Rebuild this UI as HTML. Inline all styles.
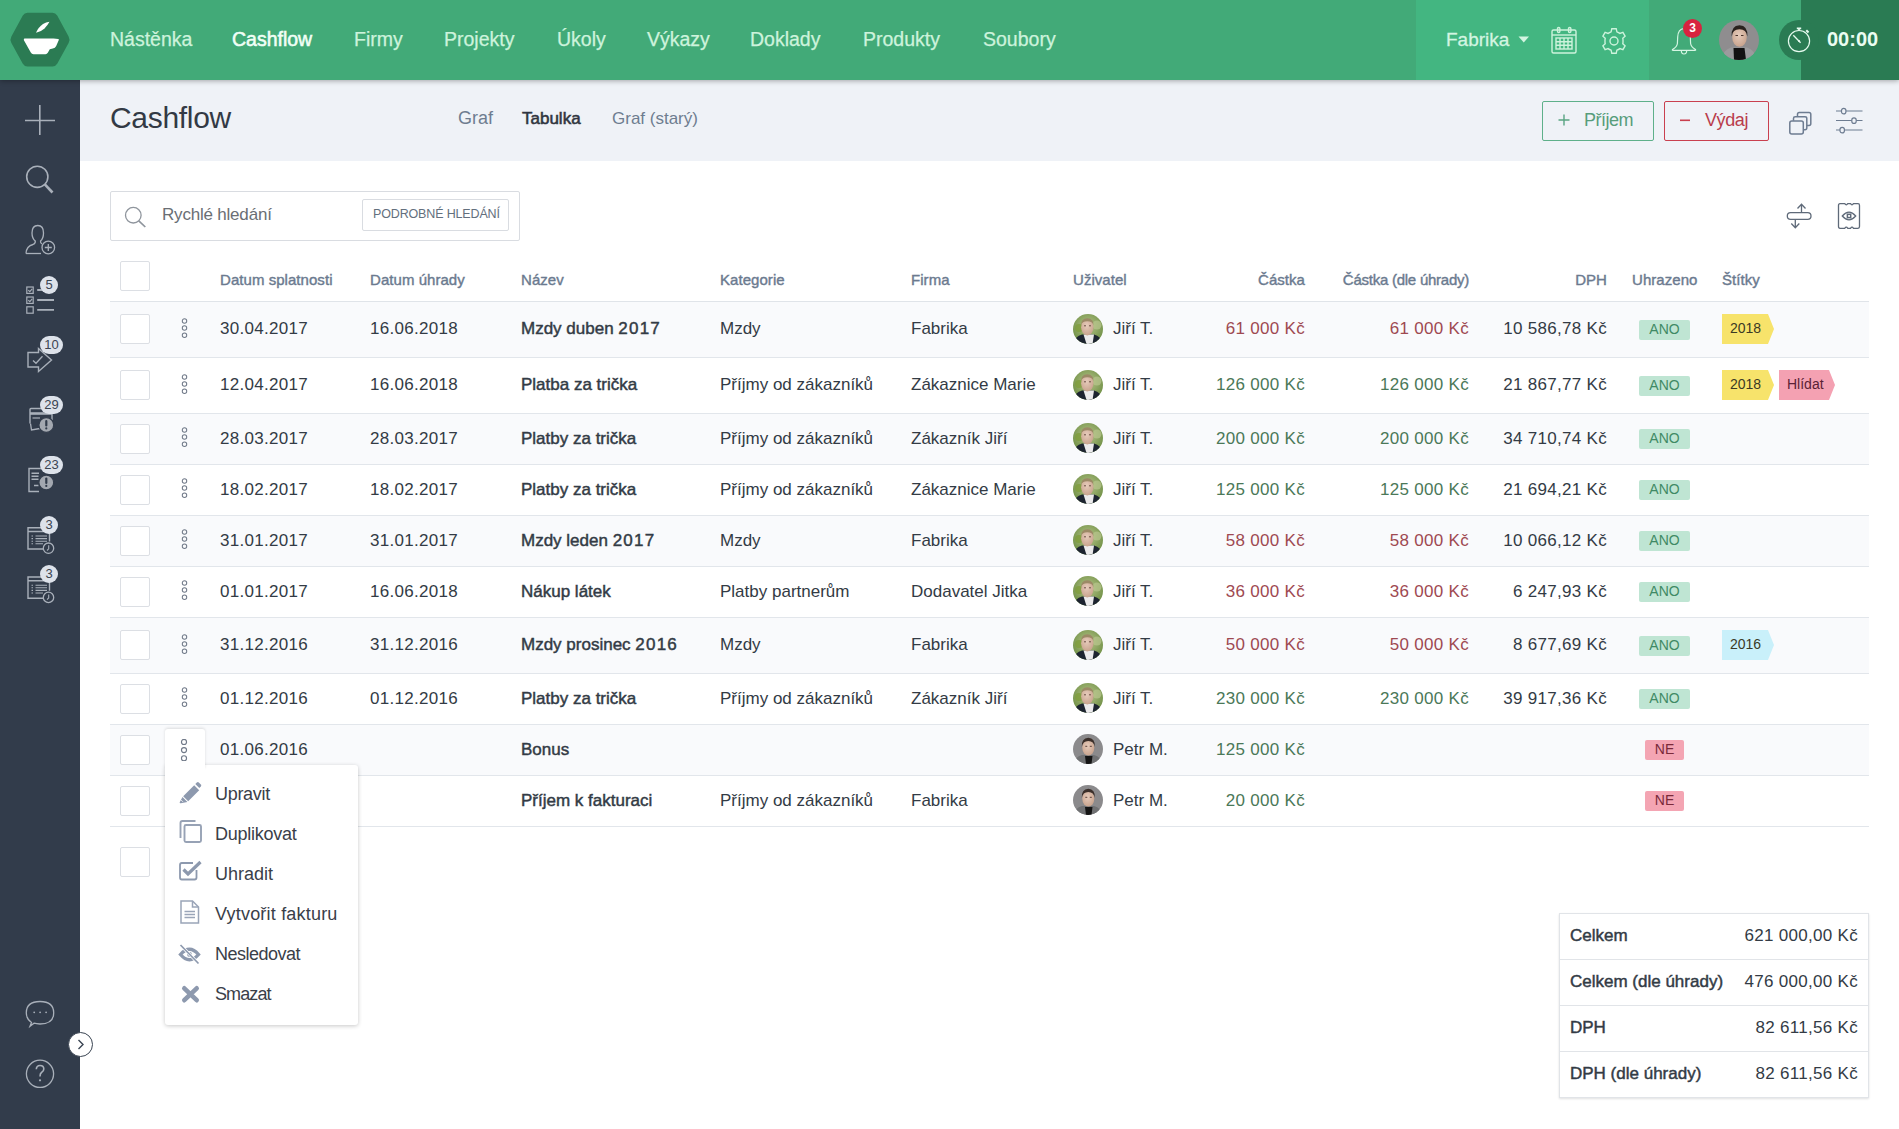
<!DOCTYPE html>
<html><head><meta charset="utf-8"><title>Cashflow</title>
<style>
*{box-sizing:border-box;margin:0;padding:0}
html,body{width:1899px;height:1129px;overflow:hidden;background:#fff;font-family:"Liberation Sans",sans-serif;color:#333b45}
.a{position:absolute}
.t{position:absolute;white-space:nowrap;line-height:1}
#hdr{position:absolute;left:0;top:0;width:1899px;height:80px;background:#42aa78;box-shadow:0 1px 5px rgba(0,0,0,.32);z-index:5}
#side{position:absolute;left:0;top:80px;width:80px;height:1049px;background:#323c4b;z-index:3}
#sub{position:absolute;left:80px;top:80px;width:1819px;height:81px;background:#eff2f7}
.nav{font-size:19.5px;color:#cdf3dc;top:29.5px;-webkit-text-stroke:0.25px}
.hd{font-size:15px;font-weight:400;-webkit-text-stroke:0.4px;color:#6b7a8f;top:272.3px;letter-spacing:0.05px}
.cb{position:absolute;left:120px;width:30px;height:30px;border:1px solid #dcdfe4;border-radius:2px;background:#fff}
.row{position:absolute;left:110px;width:1759px;border-bottom:1px solid #e2e6eb}
.alt{background:#f9fafc}
.c{font-size:17px;color:#333b45}
.b{font-weight:400;-webkit-text-stroke:0.45px}
.num{letter-spacing:0.3px}
.red{color:#9e4951}
.grn{color:#4b7858}
.ano{position:absolute;left:1639px;width:51px;height:20px;background:#bfe5d3;border-radius:2px;color:#3f8a65;font-size:14px;line-height:19px;text-align:center}
.ne{position:absolute;left:1645px;width:39px;height:20px;background:#f4a5b3;border-radius:2px;color:#7a2a3a;font-size:14px;line-height:19px;text-align:center}
.tag{position:absolute;height:30px;font-size:14px;line-height:28px;color:#3b3a25;padding-left:8px;clip-path:polygon(0 0,calc(100% - 6px) 0,100% 50%,calc(100% - 6px) 100%,0 100%)}
.dots{position:absolute;left:181px;width:7px;height:20px}
.mi{font-size:18px;color:#3a4049;left:215px}
.tot{font-size:17px}

.sb{z-index:5;background:#dde2ea;border-radius:9px;color:#3b4451;font-size:13px;line-height:18px;text-align:center}
</style></head>
<body>
<!-- HEADER -->
<div id="hdr">
  <div class="a" style="left:1416px;top:0;width:233px;height:80px;background:#43b681"></div>
  <svg class="a" style="left:0;top:0" width="80" height="80" viewBox="0 0 80 80">
    <path d="M27.5 12.8 L52.5 12.8 Q55.5 12.8 57.2 15.6 L68.6 36.6 Q70.4 39.8 68.6 43 L57.2 63.8 Q55.5 66.6 52.5 66.6 L27.5 66.6 Q24.5 66.6 22.8 63.8 L11.4 43 Q9.6 39.8 11.4 36.6 L22.8 15.6 Q24.5 12.8 27.5 12.8 Z" fill="#2b7b53"/>
    <path d="M24.5 38.6 Q23.5 38.8 23.9 40.2 L30.8 52.6 Q31.7 54.2 33.5 54.2 L45.5 54.2 Q47 54.2 47.8 52.8 L49.8 49.2 L52.8 48.6 Q55.2 48 56.2 46 L58.8 40 Q59.1 39.2 58.2 39.1 L53.5 38.6 Z" fill="#fff"/>
    <path d="M36 32.8 Q38.5 27 43 24 Q46 22 49.5 21.8 Q47.5 25.5 44.5 28.5 Q41 31.8 36 32.8 Z" fill="#fff"/>
  </svg>
  <div class="t nav" style="left:110px">Nástěnka</div>
  <div class="t nav" style="left:232px;color:#f0fff6;-webkit-text-stroke:0.55px #f0fff6">Cashflow</div>
  <div class="t nav" style="left:354px">Firmy</div>
  <div class="t nav" style="left:444px">Projekty</div>
  <div class="t nav" style="left:557px">Úkoly</div>
  <div class="t nav" style="left:647px">Výkazy</div>
  <div class="t nav" style="left:750px">Doklady</div>
  <div class="t nav" style="left:863px">Produkty</div>
  <div class="t nav" style="left:983px">Soubory</div>
  <div class="t nav" style="left:1446px;color:#d3f5e1;font-size:19px;top:30px;-webkit-text-stroke:0.3px #d3f5e1">Fabrika</div>
  <svg class="a" style="left:1518px;top:36px" width="12" height="8"><path d="M0.5 0.5 L11 0.5 L5.75 6.5Z" fill="#d3f5e1"/></svg>
  <!-- calendar -->
  <svg class="a" style="left:1550px;top:26px" width="28" height="29" viewBox="0 0 28 29" fill="none" stroke="#cdf3dc" stroke-width="1.4">
    <rect x="2" y="4" width="24" height="23" rx="1.5"/><line x1="2" y1="9" x2="26" y2="9"/>
    <rect x="7.5" y="1.5" width="2.4" height="5" rx="1.2"/><rect x="18.5" y="1.5" width="2.4" height="5" rx="1.2"/>
    <rect x="6" y="12" width="16" height="11"/><path d="M10 12v11M14 12v11M18 12v11M6 15.7h16M6 19.3h16"/>
  </svg>
  <!-- gear -->
  <svg class="a" style="left:1600px;top:27px" width="28" height="28" viewBox="-14 -14 28 28" fill="none" stroke="#cdf3dc" stroke-width="1.4">
    <path id="gp" d="M-2.2 -12.3 L2.2 -12.3 L2.9 -9.2 Q4.6 -8.6 5.9 -7.6 L8.9 -8.6 L11.1 -4.8 L8.8 -2.7 Q9.1 -1.3 9 0.1 Q9.1 1.4 8.8 2.7 L11.1 4.8 L8.9 8.6 L5.9 7.6 Q4.6 8.6 2.9 9.2 L2.2 12.3 L-2.2 12.3 L-2.9 9.2 Q-4.6 8.6 -5.9 7.6 L-8.9 8.6 L-11.1 4.8 L-8.8 2.7 Q-9.1 1.4 -9 0 Q-9.1 -1.3 -8.8 -2.7 L-11.1 -4.8 L-8.9 -8.6 L-5.9 -7.6 Q-4.6 -8.6 -2.9 -9.2 Z"/>
    <circle r="4"/>
  </svg>
  <!-- bell -->
  <svg class="a" style="left:1670px;top:25px" width="28" height="31" viewBox="0 0 28 31" fill="none" stroke="#d6f6e3" stroke-width="1.2">
    <path d="M14 3.5 Q20 4 20.3 12 L20.6 18.5 Q21 22 25.5 24.5 Q26 25.3 25 25.3 L3 25.3 Q2 25.3 2.5 24.5 Q7 22 7.4 18.5 L7.7 12 Q8 4 14 3.5Z"/>
    <path d="M11.3 25.5 Q11.3 29 14 29 Q16.7 29 16.7 25.5"/>
  </svg>
  <div class="a" style="left:1683px;top:19px;width:19px;height:19px;border-radius:50%;background:#d8233f;color:#fff;font-size:12px;font-weight:700;line-height:19px;text-align:center">3</div>
  <!-- avatar header -->
  <svg class="a" style="left:1719px;top:20px" width="40" height="40" viewBox="0 0 40 40">
    <defs><clipPath id="ch"><circle cx="20" cy="20" r="20"/></clipPath></defs>
    <g clip-path="url(#ch)">
      <rect width="40" height="40" fill="#8f8d8f"/>
      <path d="M2 40Q4 30 12 27.5L28 27.5Q36 30 38 40Z" fill="#9b9b9d"/>
      <path d="M14.5 28L25.5 28L27 40L15 40Z" fill="#121212"/>
      <ellipse cx="20.5" cy="17" rx="7.3" ry="9.8" fill="url(#gface)"/>
      <path d="M12.6 16.5Q12 5.5 20.5 5.2Q29 5.5 28.4 16.5Q27.5 9.2 20.5 9.2Q13.5 9.2 12.6 16.5Z" fill="#2a211e"/>
      <path d="M16.5 15.5H19M22 15.5H24.5" stroke="#4b342c" stroke-width="1.1"/>
    </g>
  </svg>
  <div class="a" style="left:1801px;top:0;width:98px;height:80px;background:#2a7b53"></div>
  <div class="a" style="left:1779px;top:20px;width:40px;height:40px;border-radius:50%;background:#2a7b53"></div>
  <svg class="a" style="left:1786px;top:25px" width="26" height="29" viewBox="0 0 26 29" fill="none" stroke="#e6fbef" stroke-width="1.2">
    <circle cx="13" cy="16.1" r="10.6"/>
    <path d="M7.3 10.2 L14.6 17.7" stroke-width="1.3"/><circle cx="13" cy="16.1" r="1" fill="#e6fbef" stroke="none"/>
    <path d="M10.8 3.3h4.4M13 3.5v2" stroke-width="1.8"/><path d="M20.3 5.3l2.2 2.2" stroke-width="2"/>
  </svg>
  <div class="t" style="left:1827px;top:29px;font-size:20px;font-weight:700;color:#eafdf1">00:00</div>
</div>


<!-- SIDEBAR -->
<div id="side"></div>
<svg class="a" style="left:0;top:80px;z-index:4" width="80" height="1049" viewBox="0 80 80 1049" fill="none" stroke="#a9b0ba" stroke-width="1.5">
  <!-- plus -->
  <path d="M25 120.5H55M39.8 105V135" stroke-width="1.6"/>
  <!-- search -->
  <circle cx="37.3" cy="176.8" r="10.6" stroke-width="1.6"/>
  <path d="M44.8 184.3L52.5 192.5" stroke-width="2.6"/>
  <!-- user add -->
  <path d="M26 253.5 Q26.5 246 33 244.5 Q35.5 243.5 35.3 241 Q32 238.5 32 233 Q32 225.5 37.8 225.5 Q43.5 225.5 43.5 233 Q43.5 238.5 40.5 241 Q40.3 243 42 244" stroke-width="1.3"/>
  <path d="M26 253.5H41" stroke-width="1.3"/>
  <circle cx="48.3" cy="247.5" r="6.3" stroke-width="1.3"/>
  <path d="M48.3 244V251M44.8 247.5H51.8" stroke-width="1.3"/>
  <!-- checklist -->
  <rect x="26.8" y="287" width="6.4" height="6.4" stroke-width="1.2"/>
  <rect x="26.8" y="297" width="6.4" height="6.4" stroke-width="1.2"/>
  <rect x="26.8" y="306.8" width="6.4" height="6.4" stroke-width="1.2"/>
  <path d="M28.3 290.2l1.5 1.5 2.4-2.8M28.3 300.2l1.5 1.5 2.4-2.8" stroke-width="1.1"/>
  <path d="M37.2 290H54M37.2 300H54M37.2 309.8H54" stroke-width="1.8"/>
  <!-- delegate arrow -->
  <path d="M28 352.5H38.5V348.5L51.5 360L38.5 371.5V367H28Z" stroke-width="1.4"/>
  <path d="M33 360.5L36 363.3L42.5 356.3" stroke-width="1.3"/>
  <!-- card -->
  <path d="M30 423.5V409.5Q30 408.5 31 408.5H51Q52 408.5 52 409.5V420" stroke-width="1.4"/>
  <path d="M30 413.5H52" stroke-width="2.6"/>
  <path d="M32.5 418H40" stroke-width="1.2"/>
  <path d="M30.5 423.5L31.5 430L40 428.5" stroke-width="1.3"/>
  <!-- doc ! -->
  <path d="M39 491.5H29V468.5H45.5" stroke-width="1.4"/>
  <path d="M31.5 473.3H39M31.5 476.3H38.5M31.5 479.3H38.5M34 485.5H38.5" stroke-width="1.4"/>
  <!-- doc clock 1 -->
  <path d="M43.5 549H28V527.8H49.5V541.5M28 531.5H49.5" stroke-width="1.4"/>
  <path d="M31.5 536H33M35.5 536H47M31.5 538.6H33M35.5 538.6H47M31.5 541.2H33M35.5 541.2H47M31.5 543.8H33M35.5 543.8H43" stroke-width="1.1"/>
  <circle cx="48.5" cy="548.2" r="5.2" stroke-width="1.3"/>
  <path d="M48.7 545.2V548.8L47 550.5" stroke-width="1.1"/>
  <!-- doc clock 2 -->
  <g transform="translate(0 49.2)">
  <path d="M43.5 549H28V527.8H49.5V541.5M28 531.5H49.5" stroke-width="1.4"/>
  <path d="M31.5 536H33M35.5 536H47M31.5 538.6H33M35.5 538.6H47M31.5 541.2H33M35.5 541.2H47M31.5 543.8H33M35.5 543.8H43" stroke-width="1.1"/>
  <circle cx="48.5" cy="548.2" r="5.2" stroke-width="1.3"/>
  <path d="M48.7 545.2V548.8L47 550.5" stroke-width="1.1"/>
  </g>
  <!-- chat -->
  <path d="M31.5 1022.5 Q26.3 1019 26.3 1012.8 Q26.3 1001.5 40 1001.5 Q53.7 1001.5 53.7 1012.8 Q53.7 1024 40 1024 Q36.5 1024 34 1023.2 L30 1026.3 Z" stroke-width="1.3"/>
  <circle cx="34.2" cy="1012.3" r="0.9" fill="#a9b0ba" stroke="none"/><circle cx="40.1" cy="1012.3" r="0.9" fill="#a9b0ba" stroke="none"/><circle cx="46.1" cy="1012.3" r="0.9" fill="#a9b0ba" stroke="none"/>
  <!-- help -->
  <circle cx="40" cy="1073.8" r="13.6" stroke-width="1.3"/>
  <path d="M36.3 1069.3 Q36.5 1065.5 40 1065.5 Q43.8 1065.5 43.8 1069 Q43.8 1071.3 41.5 1072.5 Q40 1073.5 40 1076.5" stroke-width="1.6"/>
  <circle cx="40" cy="1080.3" r="1.1" fill="#a9b0ba" stroke="none"/>
</svg>
<!-- sidebar filled bits & badges -->
<svg class="a" style="left:0;top:380px;z-index:4" width="80" height="120" viewBox="0 380 80 120">
  <circle cx="46.3" cy="425" r="7.4" fill="#a3a8b0" stroke="#323c4b" stroke-width="1.2"/>
  <path d="M46.3 421V425.5" stroke="#323c4b" stroke-width="2.2" stroke-linecap="round"/><circle cx="46.3" cy="428.4" r="1.1" fill="#323c4b"/>
  <circle cx="46.3" cy="482.5" r="7.4" fill="#a3a8b0" stroke="#323c4b" stroke-width="1.2"/>
  <path d="M46.3 478.5V483" stroke="#323c4b" stroke-width="2.2" stroke-linecap="round"/><circle cx="46.3" cy="485.9" r="1.1" fill="#323c4b"/>
</svg>
<div class="a sb" style="left:40px;top:275.7px;width:18px;height:18px">5</div>
<div class="a sb" style="left:40px;top:336px;width:23px;height:18px">10</div>
<div class="a sb" style="left:40px;top:396px;width:23px;height:18px">29</div>
<div class="a sb" style="left:40px;top:456px;width:23px;height:18px">23</div>
<div class="a sb" style="left:40px;top:515.6px;width:18px;height:18px">3</div>
<div class="a sb" style="left:40px;top:564.8px;width:18px;height:18px">3</div>
<!-- expand toggle -->
<div class="a" style="left:68px;top:1031.5px;width:25px;height:25px;border-radius:50%;background:#fff;border:1.5px solid #3a4452;z-index:6"></div>
<svg class="a" style="left:68px;top:1031.5px;z-index:7" width="25" height="25"><path d="M10.5 8L15 12.5L10.5 17" fill="none" stroke="#3a4452" stroke-width="1.4"/></svg>

<!-- SUBHEADER -->
<div id="sub"></div>
<div class="t" style="left:110px;top:103px;font-size:30px;color:#333a45;letter-spacing:-0.3px">Cashflow</div>
<div class="t" style="left:458px;top:109px;font-size:18px;color:#6e7d90">Graf</div>
<div class="t" style="left:522px;top:109.5px;font-size:17px;color:#2f3540;-webkit-text-stroke:0.55px">Tabulka</div>
<div class="t" style="left:612px;top:109.5px;font-size:17px;color:#6e7d90">Graf (starý)</div>


<!-- SEARCH -->
<div class="a" style="left:110px;top:191px;width:410px;height:50px;border:1px solid #d9dce1;border-radius:2px;background:#fff"></div>
<svg class="a" style="left:123px;top:205px" width="26" height="24" viewBox="0 0 26 24" fill="none" stroke="#8f959d" stroke-width="1.3">
  <circle cx="10.3" cy="10.2" r="7.8"/><path d="M15.8 15.8L22.3 22" stroke-width="1.7"/>
</svg>
<div class="t" style="left:162px;top:206px;font-size:17px;color:#6a6e74;letter-spacing:-0.2px">Rychlé hledání</div>
<div class="a" style="left:362px;top:199px;width:147px;height:32px;border:1px solid #d9dce1;border-radius:2px;background:#fff"></div>
<div class="t" style="left:373px;top:208px;font-size:12.5px;color:#636f7d;letter-spacing:-0.15px">PODROBNÉ HLEDÁNÍ</div>
<!-- right icons -->
<svg class="a" style="left:1784px;top:200px" width="30" height="32" viewBox="0 0 30 32" fill="none" stroke="#5f6a79" stroke-width="1.3">
  <rect x="3.3" y="12.7" width="23.7" height="6.6" rx="3.3"/>
  <path d="M17.5 12.7V4.5M13.5 8.5L17.5 4.3L21.5 8.5M11.3 19.3V27.5M7.3 23.5L11.3 27.7L15.3 23.5"/>
</svg>
<svg class="a" style="left:1835px;top:201px" width="28" height="30" viewBox="0 0 28 30" fill="none" stroke="#5f6a79" stroke-width="1.3">
  <path d="M3.5 4.5Q3.5 2.7 5 2.7H9.7Q10.5 3.8 11.3 3.8Q12 3.8 12.8 2.7H15.5Q16.3 3.8 17 3.8Q17.7 3.8 18.5 2.7H23Q24.5 2.7 24.5 4.5V25.5Q24.5 27.3 23 27.3H18.5Q17.7 26.2 17 26.2Q16.3 26.2 15.5 27.3H12.8Q12 26.2 11.3 26.2Q10.5 26.2 9.7 27.3H5Q3.5 27.3 3.5 25.5Z"/>
  <path d="M7.3 15Q14 7.2 20.7 15Q14 22.8 7.3 15Z"/><rect x="12.4" y="13.3" width="3.3" height="3.3" stroke-width="1.5"/>
</svg>
<!-- TABLE HEADER -->
<div class="cb" style="top:261px"></div>
<div class="t hd" style="left:220px">Datum splatnosti</div>
<div class="t hd" style="left:370px">Datum úhrady</div>
<div class="t hd" style="left:521px">Název</div>
<div class="t hd" style="left:720px">Kategorie</div>
<div class="t hd" style="left:911px">Firma</div>
<div class="t hd" style="left:1073px">Uživatel</div>
<div class="t hd" style="right:594px">Částka</div>
<div class="t hd" style="right:430px;letter-spacing:-0.25px">Částka (dle úhrady)</div>
<div class="t hd" style="right:292px">DPH</div>
<div class="t hd" style="left:1632px">Uhrazeno</div>
<div class="t hd" style="left:1722px">Štítky</div>
<div class="a" style="left:110px;top:301px;width:1759px;height:1px;background:#e0e4e9"></div>
<!-- avatar symbols -->
<svg width="0" height="0" style="position:absolute">
 <defs>
  <clipPath id="cav"><circle cx="15" cy="15" r="15"/></clipPath>
  <radialGradient id="gbg" cx="50%" cy="40%" r="60%"><stop offset="0" stop-color="#b7c58a"/><stop offset="1" stop-color="#6f8f45"/></radialGradient>
 </defs>
  <radialGradient id="gface" cx="45%" cy="40%" r="60%"><stop offset="0" stop-color="#e6cbbb"/><stop offset="1" stop-color="#c9a48e"/></radialGradient>
 <symbol id="avJ" viewBox="0 0 30 30">
  <g clip-path="url(#cav)">
   <rect width="30" height="30" fill="url(#gbg)"/>
   <circle cx="6" cy="14" r="4" fill="#7f9d3c" opacity=".8"/><circle cx="24" cy="11" r="4.5" fill="#b9c68f" opacity=".7"/>
   <path d="M0 30Q2 22 9 20.5L21 20.5Q28 22 30 30Z" fill="#1d2430"/>
   <path d="M10.5 20.5L21 20.5L19.5 30L13.5 30Z" fill="#ecebec"/>
   <ellipse cx="14.3" cy="13.2" rx="6.2" ry="8.2" fill="url(#gface)"/>
   <path d="M8 11.5Q7.8 4.5 14.3 4.3Q20.8 4.5 20.6 11.5Q19.5 7.3 14.3 7.3Q9.1 7.3 8 11.5Z" fill="#9c8a66"/>
   <path d="M11 11.8H13M16 11.8H18" stroke="#6b4f45" stroke-width="1"/>
  </g>
 </symbol>
 <symbol id="avP" viewBox="0 0 30 30">
  <g clip-path="url(#cav)">
   <rect width="30" height="30" fill="#8b8a8c"/>
   <path d="M0 30Q2 23 9 21L21 21Q28 23 30 30Z" fill="#707173"/>
   <path d="M12 22L19.5 22L18.5 30L13 30Z" fill="#141414"/>
   <ellipse cx="15.3" cy="13.6" rx="6" ry="8" fill="url(#gface)"/>
   <path d="M8.8 13Q8.3 4 15.3 3.8Q22.3 4 21.8 13Q21 7 15.3 7Q9.6 7 8.8 13Z" fill="#3b2f2a"/>
   <path d="M12.3 12.3H14.3M16.8 12.3H18.8" stroke="#5b4038" stroke-width="1"/>
  </g>
 </symbol>
<symbol id="dots" viewBox="0 0 8 22">
  <circle cx="4" cy="2.9" r="2.55" fill="none" stroke="#717a89" stroke-width="1.15"/>
  <circle cx="4" cy="11.1" r="2.55" fill="none" stroke="#717a89" stroke-width="1.15"/>
  <circle cx="4" cy="19.3" r="2.55" fill="none" stroke="#717a89" stroke-width="1.15"/>
 </symbol>
 </svg>

<div class="row alt" style="top:302px;height:56px"></div>
<div class="cb" style="top:314.0px"></div>
<svg class="dots" style="top:317.5px" width="8" height="22"><use href="#dots"/></svg>
<div class="t c num" style="left:220px;top:320.0px">30.04.2017</div>
<div class="t c num" style="left:370px;top:320.0px">16.06.2018</div>
<div class="t c b" style="left:521px;top:320.0px">Mzdy duben <span style="letter-spacing:1.2px">2017</span></div>
<div class="t c" style="left:720px;top:320.0px">Mzdy</div>
<div class="t c" style="left:911px;top:320.0px">Fabrika</div>
<svg class="a" style="left:1073px;top:313.5px" width="30" height="30"><use href="#avJ"/></svg>
<div class="t c" style="left:1113px;top:320.0px">Jiří T.</div>
<div class="t c red num" style="right:594px;top:320.0px">61 000 Kč</div>
<div class="t c red num" style="right:430px;top:320.0px">61 000 Kč</div>
<div class="t c num" style="right:292px;top:320.0px">10 586,78 Kč</div>
<div class="ano" style="top:320px">ANO</div>
<div class="tag" style="left:1722px;top:314.0px;width:52px;background:#f7e36b">2018</div>
<div class="row" style="top:358px;height:56px"></div>
<div class="cb" style="top:370.0px"></div>
<svg class="dots" style="top:373.5px" width="8" height="22"><use href="#dots"/></svg>
<div class="t c num" style="left:220px;top:376.0px">12.04.2017</div>
<div class="t c num" style="left:370px;top:376.0px">16.06.2018</div>
<div class="t c b" style="left:521px;top:376.0px">Platba za trička</div>
<div class="t c" style="left:720px;top:376.0px">Příjmy od zákazníků</div>
<div class="t c" style="left:911px;top:376.0px">Zákaznice Marie</div>
<svg class="a" style="left:1073px;top:369.5px" width="30" height="30"><use href="#avJ"/></svg>
<div class="t c" style="left:1113px;top:376.0px">Jiří T.</div>
<div class="t c grn num" style="right:594px;top:376.0px">126 000 Kč</div>
<div class="t c grn num" style="right:430px;top:376.0px">126 000 Kč</div>
<div class="t c num" style="right:292px;top:376.0px">21 867,77 Kč</div>
<div class="ano" style="top:376px">ANO</div>
<div class="tag" style="left:1722px;top:370.0px;width:52px;background:#f7e36b">2018</div>
<div class="tag" style="left:1779px;top:370.0px;width:56px;background:#f4a1b2;color:#5a2136">Hlídat</div>
<div class="row alt" style="top:414px;height:51px"></div>
<div class="cb" style="top:423.5px"></div>
<svg class="dots" style="top:427.0px" width="8" height="22"><use href="#dots"/></svg>
<div class="t c num" style="left:220px;top:429.5px">28.03.2017</div>
<div class="t c num" style="left:370px;top:429.5px">28.03.2017</div>
<div class="t c b" style="left:521px;top:429.5px">Platby za trička</div>
<div class="t c" style="left:720px;top:429.5px">Příjmy od zákazníků</div>
<div class="t c" style="left:911px;top:429.5px">Zákazník Jiří</div>
<svg class="a" style="left:1073px;top:423.0px" width="30" height="30"><use href="#avJ"/></svg>
<div class="t c" style="left:1113px;top:429.5px">Jiří T.</div>
<div class="t c grn num" style="right:594px;top:429.5px">200 000 Kč</div>
<div class="t c grn num" style="right:430px;top:429.5px">200 000 Kč</div>
<div class="t c num" style="right:292px;top:429.5px">34 710,74 Kč</div>
<div class="ano" style="top:429px">ANO</div>
<div class="row" style="top:465px;height:51px"></div>
<div class="cb" style="top:474.5px"></div>
<svg class="dots" style="top:478.0px" width="8" height="22"><use href="#dots"/></svg>
<div class="t c num" style="left:220px;top:480.5px">18.02.2017</div>
<div class="t c num" style="left:370px;top:480.5px">18.02.2017</div>
<div class="t c b" style="left:521px;top:480.5px">Platby za trička</div>
<div class="t c" style="left:720px;top:480.5px">Příjmy od zákazníků</div>
<div class="t c" style="left:911px;top:480.5px">Zákaznice Marie</div>
<svg class="a" style="left:1073px;top:474.0px" width="30" height="30"><use href="#avJ"/></svg>
<div class="t c" style="left:1113px;top:480.5px">Jiří T.</div>
<div class="t c grn num" style="right:594px;top:480.5px">125 000 Kč</div>
<div class="t c grn num" style="right:430px;top:480.5px">125 000 Kč</div>
<div class="t c num" style="right:292px;top:480.5px">21 694,21 Kč</div>
<div class="ano" style="top:480px">ANO</div>
<div class="row alt" style="top:516px;height:51px"></div>
<div class="cb" style="top:525.5px"></div>
<svg class="dots" style="top:529.0px" width="8" height="22"><use href="#dots"/></svg>
<div class="t c num" style="left:220px;top:531.5px">31.01.2017</div>
<div class="t c num" style="left:370px;top:531.5px">31.01.2017</div>
<div class="t c b" style="left:521px;top:531.5px">Mzdy leden <span style="letter-spacing:1.2px">2017</span></div>
<div class="t c" style="left:720px;top:531.5px">Mzdy</div>
<div class="t c" style="left:911px;top:531.5px">Fabrika</div>
<svg class="a" style="left:1073px;top:525.0px" width="30" height="30"><use href="#avJ"/></svg>
<div class="t c" style="left:1113px;top:531.5px">Jiří T.</div>
<div class="t c red num" style="right:594px;top:531.5px">58 000 Kč</div>
<div class="t c red num" style="right:430px;top:531.5px">58 000 Kč</div>
<div class="t c num" style="right:292px;top:531.5px">10 066,12 Kč</div>
<div class="ano" style="top:531px">ANO</div>
<div class="row" style="top:567px;height:51px"></div>
<div class="cb" style="top:576.5px"></div>
<svg class="dots" style="top:580.0px" width="8" height="22"><use href="#dots"/></svg>
<div class="t c num" style="left:220px;top:582.5px">01.01.2017</div>
<div class="t c num" style="left:370px;top:582.5px">16.06.2018</div>
<div class="t c b" style="left:521px;top:582.5px">Nákup látek</div>
<div class="t c" style="left:720px;top:582.5px">Platby partnerům</div>
<div class="t c" style="left:911px;top:582.5px">Dodavatel Jitka</div>
<svg class="a" style="left:1073px;top:576.0px" width="30" height="30"><use href="#avJ"/></svg>
<div class="t c" style="left:1113px;top:582.5px">Jiří T.</div>
<div class="t c red num" style="right:594px;top:582.5px">36 000 Kč</div>
<div class="t c red num" style="right:430px;top:582.5px">36 000 Kč</div>
<div class="t c num" style="right:292px;top:582.5px">6 247,93 Kč</div>
<div class="ano" style="top:582px">ANO</div>
<div class="row alt" style="top:618px;height:56px"></div>
<div class="cb" style="top:630.0px"></div>
<svg class="dots" style="top:633.5px" width="8" height="22"><use href="#dots"/></svg>
<div class="t c num" style="left:220px;top:636.0px">31.12.2016</div>
<div class="t c num" style="left:370px;top:636.0px">31.12.2016</div>
<div class="t c b" style="left:521px;top:636.0px">Mzdy prosinec <span style="letter-spacing:1.2px">2016</span></div>
<div class="t c" style="left:720px;top:636.0px">Mzdy</div>
<div class="t c" style="left:911px;top:636.0px">Fabrika</div>
<svg class="a" style="left:1073px;top:629.5px" width="30" height="30"><use href="#avJ"/></svg>
<div class="t c" style="left:1113px;top:636.0px">Jiří T.</div>
<div class="t c red num" style="right:594px;top:636.0px">50 000 Kč</div>
<div class="t c red num" style="right:430px;top:636.0px">50 000 Kč</div>
<div class="t c num" style="right:292px;top:636.0px">8 677,69 Kč</div>
<div class="ano" style="top:636px">ANO</div>
<div class="tag" style="left:1722px;top:630.0px;width:52px;background:#c9f0fa">2016</div>
<div class="row" style="top:674px;height:51px"></div>
<div class="cb" style="top:683.5px"></div>
<svg class="dots" style="top:687.0px" width="8" height="22"><use href="#dots"/></svg>
<div class="t c num" style="left:220px;top:689.5px">01.12.2016</div>
<div class="t c num" style="left:370px;top:689.5px">01.12.2016</div>
<div class="t c b" style="left:521px;top:689.5px">Platby za trička</div>
<div class="t c" style="left:720px;top:689.5px">Příjmy od zákazníků</div>
<div class="t c" style="left:911px;top:689.5px">Zákazník Jiří</div>
<svg class="a" style="left:1073px;top:683.0px" width="30" height="30"><use href="#avJ"/></svg>
<div class="t c" style="left:1113px;top:689.5px">Jiří T.</div>
<div class="t c grn num" style="right:594px;top:689.5px">230 000 Kč</div>
<div class="t c grn num" style="right:430px;top:689.5px">230 000 Kč</div>
<div class="t c num" style="right:292px;top:689.5px">39 917,36 Kč</div>
<div class="ano" style="top:689px">ANO</div>
<div class="row alt" style="top:725px;height:51px"></div>
<div class="cb" style="top:734.5px"></div>
<svg class="dots" style="top:738.0px" width="8" height="22"><use href="#dots"/></svg>
<div class="t c num" style="left:220px;top:740.5px">01.06.2016</div>
<div class="t c b" style="left:521px;top:740.5px">Bonus</div>
<svg class="a" style="left:1073px;top:734.0px" width="30" height="30"><use href="#avP"/></svg>
<div class="t c" style="left:1113px;top:740.5px">Petr M.</div>
<div class="t c grn num" style="right:594px;top:740.5px">125 000 Kč</div>
<div class="ne" style="top:740px">NE</div>
<div class="row" style="top:776px;height:51px"></div>
<div class="cb" style="top:785.5px"></div>
<div class="t c b" style="left:521px;top:791.5px">Příjem k fakturaci</div>
<div class="t c" style="left:720px;top:791.5px">Příjmy od zákazníků</div>
<div class="t c" style="left:911px;top:791.5px">Fabrika</div>
<svg class="a" style="left:1073px;top:785.0px" width="30" height="30"><use href="#avP"/></svg>
<div class="t c" style="left:1113px;top:791.5px">Petr M.</div>
<div class="t c grn num" style="right:594px;top:791.5px">20 000 Kč</div>
<div class="ne" style="top:791px">NE</div>
<div class="cb" style="top:847px"></div>

<!-- SUBHEADER BUTTONS -->
<div class="a" style="left:1542px;top:101px;width:112px;height:40px;border:1px solid #5eb08a;border-radius:2px"></div>
<svg class="a" style="left:1557px;top:112px" width="14" height="16"><path d="M7 2.5V13.5M1.5 8H12.5" stroke="#5aa583" stroke-width="1.4" fill="none"/></svg>
<div class="t" style="left:1584px;top:111px;font-size:18px;color:#579d7b;letter-spacing:-0.5px">Příjem</div>
<div class="a" style="left:1664px;top:101px;width:105px;height:40px;border:1px solid #c9404f;border-radius:2px"></div>
<svg class="a" style="left:1678px;top:112px" width="14" height="16"><path d="M2 8.3H12" stroke="#c93f4e" stroke-width="1.6" fill="none"/></svg>
<div class="t" style="left:1705px;top:111px;font-size:18px;color:#b93d4c;letter-spacing:-0.4px">Výdaj</div>
<svg class="a" style="left:1787px;top:108px" width="28" height="28" viewBox="0 0 28 28" fill="none" stroke="#6d7c91" stroke-width="1.5">
  <rect x="2.8" y="13" width="13.5" height="13" rx="2"/>
  <path d="M6.5 12.8V10.5Q6.5 8.8 8.2 8.8H18Q19.8 8.8 19.8 10.5V20Q19.8 21.7 18 21.7H16.5"/>
  <path d="M10.5 8.6V6.3Q10.5 4.5 12.2 4.5H22Q23.8 4.5 23.8 6.3V15.8Q23.8 17.5 22 17.5H20"/>
</svg>
<svg class="a" style="left:1834px;top:106px" width="30" height="30" viewBox="0 0 30 30" fill="none" stroke="#6d7c91" stroke-width="1.2">
  <path d="M2 5H7.5M12 5H28.5M2 14.5H17.8M22.2 14.5H28.5M2 24H6M10.5 24H28.5"/>
  <rect x="7.5" y="2.3" width="4.4" height="5.6" rx="2.2"/>
  <rect x="17.8" y="11.8" width="4.4" height="5.6" rx="2.2"/>
  <rect x="6" y="21.3" width="4.4" height="5.6" rx="2.2"/>
</svg>

<!-- CONTEXT MENU -->
<div class="a" style="left:165px;top:765px;width:193px;height:260px;background:#fff;border-radius:3px;box-shadow:0 1px 4px rgba(0,0,0,.22);z-index:8"></div>
<div class="a" style="left:165px;top:729px;width:40px;height:40px;background:#fff;border-radius:3px 3px 0 0;box-shadow:0 -1px 3px rgba(0,0,0,.12);z-index:9"></div>
<svg class="a" style="left:180px;top:738.5px;z-index:10" width="8" height="22"><use href="#dots"/></svg>
<div class="a" style="left:165px;top:766px;width:40px;height:6px;background:#fff;z-index:10"></div>
<svg class="a" style="left:176px;top:778px;z-index:11" width="200" height="230" viewBox="176 778 200 230">
  <!-- pencil -->
  <path d="M183.2 796.2L194.2 785.2L199.2 790.2L188.2 801.2Z" fill="#8d99ae"/>
  <path d="M195.3 784.1L196.8 782.6Q197.8 781.6 198.8 782.6L200.8 784.6Q201.8 785.6 200.8 786.6L199.3 788.1Z" fill="#8d99ae"/>
  <path d="M182.5 797L187.4 801.9L180.8 803.3Q179.4 803.6 179.7 802.2Z" fill="#8d99ae"/>
  <path d="M181.3 800.2L182.8 801.7" stroke="#fff" stroke-width="1"/>
  <!-- duplicate -->
  <g fill="none" stroke="#97a2b5" stroke-width="1.9">
   <path d="M180.5 838V823Q180.5 821 182.5 821H195.5"/>
   <rect x="184.5" y="825" width="16.5" height="17" rx="1.5"/>
  </g>
  <!-- check box -->
  <g fill="none" stroke="#8d99ae">
   <path d="M196.5 870V877.5Q196.5 879.5 194.5 879.5H181.8Q180 879.5 180 877.5V865Q180 863 181.8 863H193" stroke-width="1.8"/>
   <path d="M183.5 869.5L188 874L200.5 862" stroke-width="3.2"/>
  </g>
  <!-- doc -->
  <g fill="none" stroke="#9aa5b8" stroke-width="1.5">
   <path d="M181 901H192.5L198.5 907V923H181Z"/><path d="M192.5 901V907H198.5"/>
   <path d="M184.5 911.5H195M184.5 914.5H195M184.5 917.5H195"/>
  </g>
  <!-- eye slash -->
  <g fill="none" stroke="#8d99ae">
   <path d="M180.5 954.5Q189.5 944 198.5 954.5Q189.5 965 180.5 954.5Z" stroke-width="3.4"/>
   <circle cx="189.5" cy="954.5" r="2.4" fill="#8d99ae" stroke="none"/>
   <path d="M180.5 945L198.5 963.5" stroke="#fff" stroke-width="3.2"/>
   <path d="M180.5 945L198.5 963.5" stroke-width="1.7"/>
  </g>
  <!-- x -->
  <path d="M184.3 988.3L196.7 1000.2M196.7 988.3L184.3 1000.2" stroke="#8d99ae" stroke-width="4.6" stroke-linecap="round" fill="none"/>
</svg>
<div class="t mi" style="top:785px;z-index:11;letter-spacing:-0.3px">Upravit</div>
<div class="t mi" style="top:825px;z-index:11;letter-spacing:-0.25px">Duplikovat</div>
<div class="t mi" style="top:865px;z-index:11;letter-spacing:0px">Uhradit</div>
<div class="t mi" style="top:905px;z-index:11;letter-spacing:0.2px">Vytvořit fakturu</div>
<div class="t mi" style="top:945px;z-index:11;letter-spacing:-0.5px">Nesledovat</div>
<div class="t mi" style="top:985px;z-index:11;letter-spacing:-0.9px">Smazat</div>

<!-- TOTALS -->
<div class="a" style="left:1559px;top:913px;width:310px;height:185px;background:#fff;border:1px solid #e1e4e8;box-shadow:0 1px 2px rgba(0,0,0,.12)"></div>
<div class="a" style="left:1560px;top:959px;width:308px;height:1px;background:#e1e4e8"></div>
<div class="a" style="left:1560px;top:1005px;width:308px;height:1px;background:#e1e4e8"></div>
<div class="a" style="left:1560px;top:1051px;width:308px;height:1px;background:#e1e4e8"></div>
<div class="t tot b" style="left:1570px;top:927px">Celkem</div>
<div class="t tot num" style="right:41px;top:927px">621 000,00 Kč</div>
<div class="t tot b" style="left:1570px;top:973px">Celkem (dle úhrady)</div>
<div class="t tot num" style="right:41px;top:973px">476 000,00 Kč</div>
<div class="t tot b" style="left:1570px;top:1019px">DPH</div>
<div class="t tot num" style="right:41px;top:1019px">82 611,56 Kč</div>
<div class="t tot b" style="left:1570px;top:1065px">DPH (dle úhrady)</div>
<div class="t tot num" style="right:41px;top:1065px">82 611,56 Kč</div>

</body></html>
